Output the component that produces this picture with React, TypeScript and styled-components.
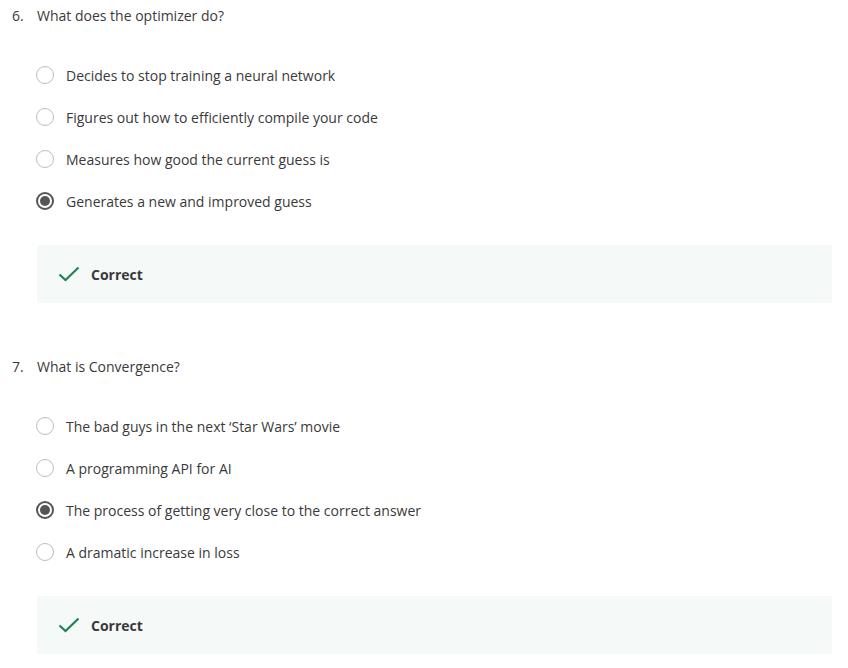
import React from "react";
import styled, { createGlobalStyle } from "styled-components";

const Global = createGlobalStyle`
  html, body { margin: 0; padding: 0; background: #fff; }
  body { font-family: "Open Sans", "Liberation Sans", sans-serif; color: #3b3b3b; }
`;

const Page = styled.div`
  width: 848px;
  padding: 6px 16px 0 12px;
  box-sizing: border-box;
  display: flex;
  flex-direction: column;
`;

const Question = styled.section`
  display: flex;
  flex-direction: column;
  margin-bottom: 54px;
  &:last-child { margin-bottom: 0; }
`;

const Title = styled.div`
  display: flex;
  font-size: 14px;
  line-height: 20px;
  color: #3a3a3a;
`;

const Num = styled.span`
  width: 25px;
`;

const Options = styled.div`
  display: flex;
  flex-direction: column;
  gap: 20px;
  margin-top: 38px;
  padding-left: 24px;
`;

const Option = styled.label`
  display: flex;
  align-items: center;
  height: 22px;
  font-size: 14px;
  color: #3a3a3a;
`;

const Radio = styled.span<{ $checked?: boolean }>`
  width: 18px;
  height: 18px;
  box-sizing: border-box;
  border-radius: 50%;
  border: ${(p) => (p.$checked ? "2px solid #555" : "1.5px solid #bdbdbd")};
  display: flex;
  align-items: center;
  justify-content: center;
  margin-right: 12px;
  &::after {
    content: "";
    width: 10px;
    height: 10px;
    border-radius: 50%;
    background: #555;
    display: ${(p) => (p.$checked ? "block" : "none")};
  }
`;

const Feedback = styled.div`
  margin-top: 33px;
  margin-left: 25px;
  height: 58px;
  background: #f5f9f8;
  display: flex;
  align-items: center;
  padding-left: 21px;
  gap: 11px;
  font-size: 14px;
  font-weight: 700;
  color: #3a3a3a;
`;

const Check = () => (
  <svg width="22" height="16" viewBox="0 0 22 16">
    <path d="M1.5 8.5 L7.5 14 L20.5 1.5" fill="none" stroke="#1f8354" strokeWidth="2.2" />
  </svg>
);

type Q = { n: number; title: string; options: string[]; selected: number };

const data: Q[] = [
  {
    n: 6,
    title: "What does the optimizer do?",
    options: [
      "Decides to stop training a neural network",
      "Figures out how to efficiently compile your code",
      "Measures how good the current guess is",
      "Generates a new and improved guess",
    ],
    selected: 3,
  },
  {
    n: 7,
    title: "What is Convergence?",
    options: [
      "The bad guys in the next \u2018Star Wars\u2019 movie",
      "A programming API for AI",
      "The process of getting very close to the correct answer",
      "A dramatic increase in loss",
    ],
    selected: 2,
  },
];

export default function App() {
  return (
    <>
      <Global />
      <Page>
        {data.map((q) => (
          <Question key={q.n}>
            <Title>
              <Num>{q.n}.</Num>
              <span>{q.title}</span>
            </Title>
            <Options>
              {q.options.map((o, i) => (
                <Option key={i}>
                  <Radio $checked={i === q.selected} />
                  {o}
                </Option>
              ))}
            </Options>
            <Feedback>
              <Check />
              Correct
            </Feedback>
          </Question>
        ))}
      </Page>
    </>
  );
}
